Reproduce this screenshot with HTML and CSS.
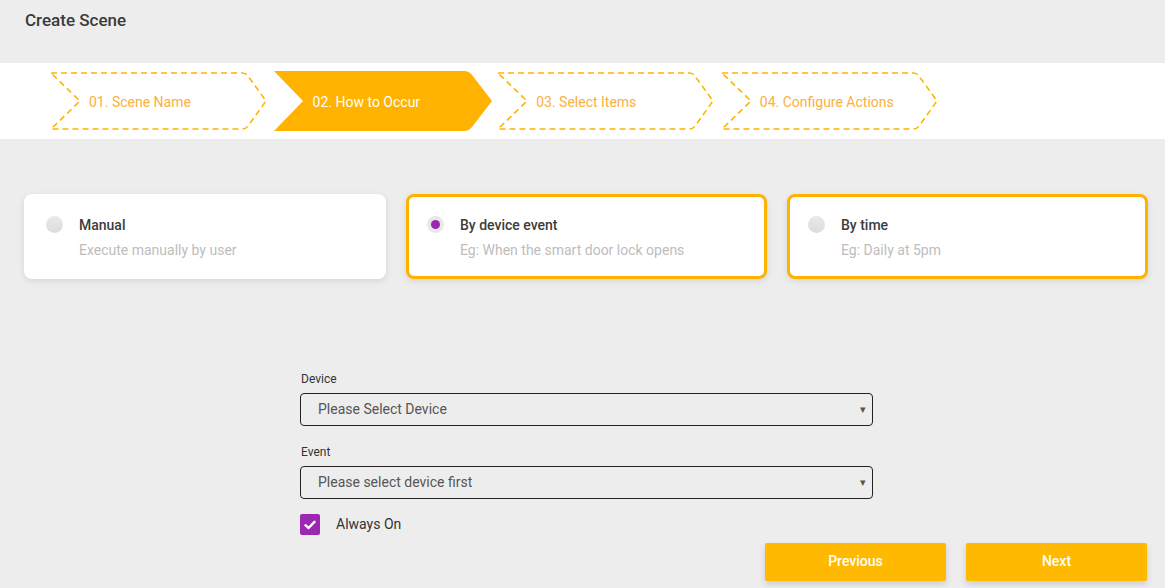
FILE: index.html
```html
<!DOCTYPE html>
<html>
<head>
<meta charset="utf-8">
<link rel="stylesheet" href="styles.css">
</head>
<body>
<header class="page-header"><h1 class="title">Create Scene</h1></header>

<nav class="steps-band">
  <div class="step">
    <svg class="step-bg" width="218" height="58" viewBox="0 0 218 58"><path d="M1,1 H192 Q196,1 198,4 L216,29 L198,54 Q196,57 192,57 H1 L30,29 Z" fill="none" stroke="#ffb300" stroke-width="1.6" stroke-dasharray="6 4"/></svg>
    <span class="step-label">01. Scene Name</span>
  </div>
  <div class="step step-active">
    <svg class="step-bg" width="218" height="60" viewBox="0 0 218 60"><path d="M0,0 H190 Q195,0 198,4 L218,30 L198,56 Q195,60 190,60 H0 L29,30 Z" fill="#ffb300"/></svg>
    <span class="step-label">02. How to Occur</span>
  </div>
  <div class="step">
    <svg class="step-bg" width="218" height="58" viewBox="0 0 218 58"><path d="M1,1 H192 Q196,1 198,4 L216,29 L198,54 Q196,57 192,57 H1 L30,29 Z" fill="none" stroke="#ffb300" stroke-width="1.6" stroke-dasharray="6 4"/></svg>
    <span class="step-label">03. Select Items</span>
  </div>
  <div class="step">
    <svg class="step-bg" width="218" height="58" viewBox="0 0 218 58"><path d="M1,1 H192 Q196,1 198,4 L216,29 L198,54 Q196,57 192,57 H1 L30,29 Z" fill="none" stroke="#ffb300" stroke-width="1.6" stroke-dasharray="6 4"/></svg>
    <span class="step-label">04. Configure Actions</span>
  </div>
</nav>

<section class="options">
  <div class="card">
    <span class="radio"></span>
    <div class="card-text">
      <div class="card-title">Manual</div>
      <div class="card-sub">Execute manually by user</div>
    </div>
  </div>
  <div class="card card-outlined">
    <span class="radio radio-on"><span class="radio-dot"></span></span>
    <div class="card-text">
      <div class="card-title">By device event</div>
      <div class="card-sub">Eg: When the smart door lock opens</div>
    </div>
  </div>
  <div class="card card-outlined">
    <span class="radio"></span>
    <div class="card-text">
      <div class="card-title">By time</div>
      <div class="card-sub">Eg: Daily at 5pm</div>
    </div>
  </div>
</section>

<section class="form">
  <div class="field-label">Device</div>
  <div class="select"><span>Please Select Device</span><span class="caret">&#9662;</span></div>
  <div class="field-label label-2">Event</div>
  <div class="select"><span>Please select device first</span><span class="caret">&#9662;</span></div>
  <div class="check-row">
    <span class="checkbox"><svg width="12" height="10" viewBox="0 0 12 10"><path d="M1.5,5.2 L4.6,8 L10.5,1.8" fill="none" stroke="#fff" stroke-width="2.4" stroke-linecap="round" stroke-linejoin="round"/></svg></span>
    <span class="check-label">Always On</span>
  </div>
</section>

<footer class="actions">
  <button class="btn">Previous</button>
  <button class="btn">Next</button>
</footer>
</body>
</html>
```

FILE: styles.css
```css
* { box-sizing: border-box; }
html, body { margin: 0; padding: 0; }
body {
  background: #ededed;
  font-family: Roboto, "Liberation Sans", sans-serif;
  color: #333;
  width: 1165px;
  height: 588px;
  overflow: hidden;
}
.page-header {
  height: 63px;
  padding: 11px 25px 0;
}
.title {
  margin: 0;
  font-size: 17px;
  line-height: 19px;
  font-weight: 500;
  color: #3a3a3a;
}
.steps-band {
  background: #fff;
  height: 76px;
  padding: 9px 50px;
  display: flex;
  align-items: center;
  gap: 5.6px;
}
.step {
  position: relative;
  width: 218px;
  height: 58px;
  display: flex;
  align-items: center;
  padding-left: 39px;
  flex: none;
}
.step-bg {
  position: absolute;
  left: 0;
  top: 0;
}
.step-active .step-bg { top: -1px; }
.step-label {
  position: relative;
  font-size: 14px;
  color: #fbb040;
  padding-top: 1px;
}
.step-active .step-label { color: #fff; }

.options {
  display: flex;
  gap: 20px;
  padding: 0 17px 0 24px;
  margin-top: 55px;
}
.card {
  width: 362px;
  height: 85px;
  background: #fff;
  border: 3px solid transparent;
  border-radius: 8px;
  box-shadow: 0 2px 6px rgba(0,0,0,0.1);
  display: flex;
  align-items: flex-start;
  padding: 16px 0 0 19px;
}
.card-outlined {
  border-color: #ffb300;
  width: 361px;
}
.card-outlined .radio { margin-left: -1px; }
.radio {
  width: 17px;
  height: 17px;
  border-radius: 50%;
  background: linear-gradient(#e9e9e9, #dcdcdc);
  flex: none;
  margin-top: 3px;
  display: flex;
  align-items: center;
  justify-content: center;
}
.radio-on { background: #e8e8e8; }
.radio-dot {
  width: 9px;
  height: 9px;
  border-radius: 50%;
  background: #9c27b0;
}
.card-text { margin-left: 16px; }
.card-title {
  font-size: 14px;
  line-height: 18px;
  font-weight: 500;
  color: #3c3c3c;
  margin-top: 3px;
}
.card-sub {
  font-size: 14px;
  line-height: 18px;
  color: #bdbdbd;
  margin-top: 7px;
}

.form {
  width: 573px;
  margin: 93px 0 0 300px;
}
.field-label {
  font-size: 12px;
  line-height: 14px;
  color: #333;
  padding-left: 1px;
}
.label-2 { margin-top: 19px; }
.select {
  margin-top: 7px;
  height: 33px;
  border: 1px solid #222;
  border-radius: 4px;
  display: flex;
  align-items: center;
  justify-content: space-between;
  padding: 0 6px 1px 17px;
  font-size: 14px;
  color: #555;
}
.caret {
  font-size: 11px;
  color: #555;
}
.check-row {
  margin-top: 15px;
  display: flex;
  align-items: center;
  height: 21px;
}
.checkbox {
  width: 20px;
  height: 21px;
  border-radius: 2px;
  background: #9c27b0;
  display: flex;
  align-items: center;
  justify-content: center;
}
.check-label {
  margin-left: 16px;
  font-size: 14px;
  color: #333;
  padding-bottom: 1px;
}

.actions {
  display: flex;
  justify-content: flex-end;
  gap: 20px;
  padding-right: 18px;
  margin-top: 8px;
}
.btn {
  width: 181px;
  height: 38px;
  border: none;
  border-radius: 2px;
  background: #ffb900;
  color: #fff;
  font-family: Roboto, "Liberation Sans", sans-serif;
  font-size: 14px;
  font-weight: 500;
  padding: 0 0 3px;
  box-shadow: 0 3px 6px rgba(0,0,0,0.15);
}
```
